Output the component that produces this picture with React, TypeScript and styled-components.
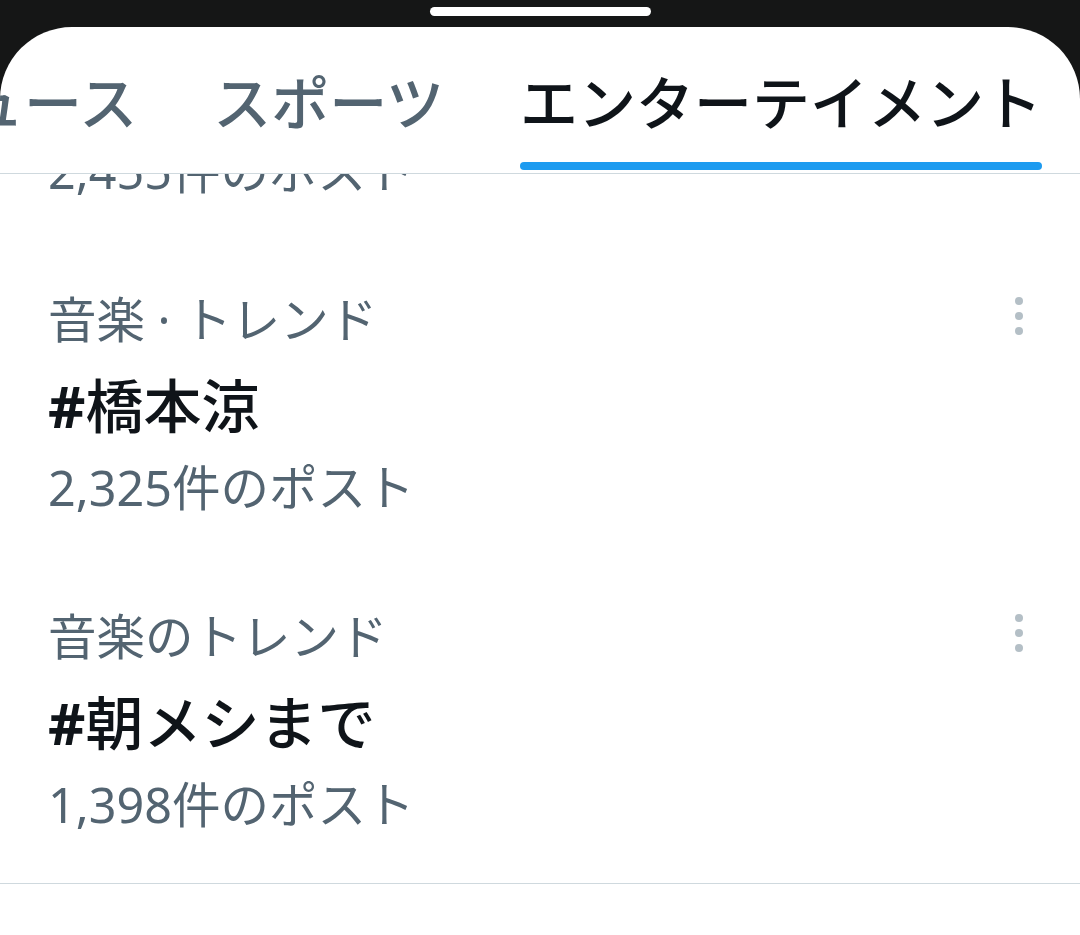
import styled, { createGlobalStyle } from 'styled-components';
import * as React from 'react';

const GlobalStyle = createGlobalStyle`
  html, body {
    margin: 0;
    background: #151616;
  }
  body {
    font-family: "Noto Sans", "Noto Sans CJK JP", sans-serif;
  }
`;

const Page = styled.div`
  min-height: 100vh;
  display: flex;
  flex-direction: column;
  background: #151616;
`;

const StatusStrip = styled.div`
  height: 27px;
  box-sizing: border-box;
  padding-top: 7px;
  display: flex;
  justify-content: center;
`;

const HomePill = styled.div`
  width: 221px;
  height: 9px;
  border-radius: 5px;
  background: #fff;
`;

const Sheet = styled.div`
  flex: 1;
  display: flex;
  flex-direction: column;
  background: #fff;
  border-radius: 72px 72px 0 0;
  overflow: hidden;
`;

const Header = styled.div`
  padding-top: 41px;
  border-bottom: 1px solid #cfd9de;
`;

// scrolled all the way to the right, so the first tabs run off the left edge
const TabRow = styled.div`
  display: flex;
  justify-content: flex-end;
  overflow: hidden;
`;

const Tab = styled.div`
  flex-shrink: 0;
  padding: 0 38px;
  display: flex;
  flex-direction: column;
`;

const TabLabel = styled.span<{ $active?: boolean }>`
  font-size: 58px;
  line-height: 70px;
  font-weight: 500;
  white-space: nowrap;
  color: ${({ $active }) => ($active ? '#0f1419' : '#536471')};
`;

const Indicator = styled.div<{ $active?: boolean }>`
  height: 8px;
  margin: 24px 0 3px;
  border-radius: 4px;
  background: ${({ $active }) => ($active ? '#1d9bf0' : 'transparent')};
`;

const ListViewport = styled.div`
  flex: 1;
  overflow: hidden;
`;

const List = styled.div<{ $offset: number }>`
  margin-top: ${({ $offset }) => -$offset}px;
`;

const TrendItem = styled.div`
  padding: 44px 57px 45px 48px;
`;

const MetaRow = styled.div`
  display: flex;
  justify-content: space-between;
  align-items: center;
`;

const Category = styled.div`
  font-size: 48.5px;
  line-height: 60px;
  color: #536471;
  white-space: nowrap;
`;

const Title = styled.div`
  margin-top: 25px;
  font-size: 58px;
  line-height: 64px;
  font-weight: 500;
  color: #0f1419;
  white-space: nowrap;
`;

const Hash = styled.span`
  font-weight: 700;
`;

const Count = styled.div`
  margin-top: 19px;
  font-size: 48.5px;
  line-height: 60px;
  color: #536471;
  white-space: nowrap;
`;

const MoreButton = styled.div`
  display: flex;
  margin-top: -6px;
`;

const Divider = styled.div`
  margin-top: 4px;
  border-top: 1px solid #cfd9de;
`;

const MoreIcon = () => (
  <svg width="8" height="38" viewBox="0 0 8 38">
    <circle cx="4" cy="4" r="4" fill="#b4bfc6" />
    <circle cx="4" cy="19" r="4" fill="#b4bfc6" />
    <circle cx="4" cy="34" r="4" fill="#b4bfc6" />
  </svg>
);

const tabs = ['おすすめ', 'トレンド', 'ニュース', 'スポーツ', 'エンターテイメント'];

const trends = [
  { category: 'エンターテイメント · トレンド', tag: 'ラヴィット', count: '2,455件のポスト' },
  { category: '音楽 · トレンド', tag: '橋本涼', count: '2,325件のポスト' },
  { category: '音楽のトレンド', tag: '朝メシまで', count: '1,398件のポスト' },
];

export default function App() {
  const [activeTab] = React.useState('エンターテイメント');

  return (
    <>
      <GlobalStyle />
      <Page>
        <StatusStrip>
          <HomePill />
        </StatusStrip>
        <Sheet>
          <Header>
            <TabRow>
              {tabs.map((tab) => (
                <Tab key={tab}>
                  <TabLabel $active={tab === activeTab}>{tab}</TabLabel>
                  <Indicator $active={tab === activeTab} />
                </Tab>
              ))}
            </TabRow>
          </Header>
          <ListViewport>
            <List $offset={246}>
              {trends.map((trend) => (
                <TrendItem key={trend.tag}>
                  <MetaRow>
                    <Category>{trend.category}</Category>
                    <MoreButton>
                      <MoreIcon />
                    </MoreButton>
                  </MetaRow>
                  <Title>
                    <Hash>#</Hash>
                    {trend.tag}
                  </Title>
                  <Count>{trend.count}</Count>
                </TrendItem>
              ))}
              <Divider />
            </List>
          </ListViewport>
        </Sheet>
      </Page>
    </>
  );
}
